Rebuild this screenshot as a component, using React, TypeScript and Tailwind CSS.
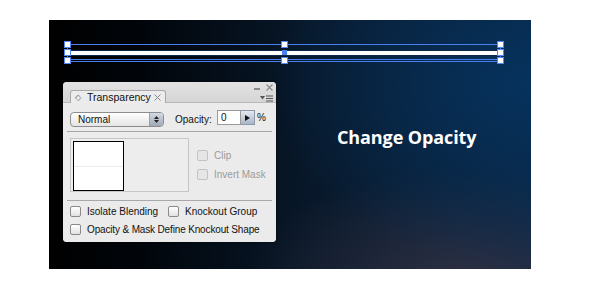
import React from "react";

function Handle({ x, y, solid = false }: { x: number; y: number; solid?: boolean }) {
  if (solid) {
    return (
      <div
        className="absolute w-[5px] h-[5px] bg-[#4a7ff0]"
        style={{ left: x - 2.5, top: y - 2.5 }}
      />
    );
  }
  return (
    <div
      className="absolute w-[7px] h-[7px] border-[1.5px] border-[#5486f2] bg-white"
      style={{ left: x - 3.5, top: y - 3.5 }}
    />
  );
}

function Check({ disabled = false }: { disabled?: boolean }) {
  return (
    <div
      className={
        disabled
          ? "w-[11px] h-[11px] shrink-0 rounded-[2px] border border-[#c2c2c2] bg-[#e6e6e6]"
          : "w-[11px] h-[11px] shrink-0 rounded-[2px] border border-[#8a8a8a] bg-[linear-gradient(#ffffff,#e2e2e2)]"
      }
    />
  );
}

function Panel() {
  return (
    <div className="absolute left-[14px] top-[62px] w-[213px] h-[160px] rounded-[4px] bg-[#e9e9e9] overflow-hidden flex flex-col font-['Liberation_Sans',Arial,sans-serif] text-[10px] text-[#111] shadow-[0_0_3px_rgba(0,0,0,0.6)]">
      {/* chrome */}
      <div className="h-[21px] bg-[linear-gradient(#e2e2e2,#d6d6d6)] border-b border-[#b9b9b9] flex flex-col">
        <div className="h-[8px] flex justify-end items-start pr-[3px] gap-[6px] text-[#8a8a8a]">
          <div className="w-[6px] h-[1.5px] bg-[#8a8a8a] mt-[6px]" />
          <svg width="7" height="7" viewBox="0 0 7 7" className="mt-[2px]">
            <path d="M0.5 0.5 L6.5 6.5 M6.5 0.5 L0.5 6.5" stroke="#8a8a8a" strokeWidth="1.1" />
          </svg>
        </div>
        <div className="h-[13px] flex items-stretch pl-[7px] pr-[3px]">
          <div className="w-[96px] -mb-px bg-[#ececec] border border-b-0 border-[#a9a9a9] rounded-t-[3px] flex items-center pl-[4px] pt-[1px] text-[10.5px] leading-none">
            <span className="text-[8px] text-[#666] w-[8px]">◇</span>
            <span className="ml-[4px]">Transparency</span>
            <svg width="7" height="7" viewBox="0 0 7 7" className="ml-[3px]">
              <path d="M0.5 0.5 L6.5 6.5 M6.5 0.5 L0.5 6.5" stroke="#8a8a8a" strokeWidth="1" />
            </svg>
          </div>
          <div className="ml-auto flex items-center gap-[1px] pt-[4px]">
            <svg width="5" height="4" viewBox="0 0 5 4">
              <path d="M0 0 L5 0 L2.5 3.5 Z" fill="#555" />
            </svg>
            <svg width="7" height="7" viewBox="0 0 7 7">
              <path d="M0 1 H7 M0 3.5 H7 M0 6 H7" stroke="#555" strokeWidth="1" />
            </svg>
          </div>
        </div>
      </div>

      {/* body */}
      <div className="flex flex-col px-[4px] bg-[#ebebeb] flex-1">
        <div className="mt-[7px] h-[17px] flex items-start">
          <div className="ml-[3px] mt-[2px] w-[94px] h-[15px] rounded-[4px] border border-[#8d8d8d] bg-[linear-gradient(#ffffff,#e4e4e4)] flex items-center">
            <span className="pl-[7px] flex-1 leading-none">Normal</span>
            <div className="w-[14px] h-full border-l border-[#a0a0a0] rounded-r-[3px] bg-[linear-gradient(#d4dae3,#9ea8b6)] flex flex-col items-center justify-center gap-[1px]">
              <svg width="5" height="3" viewBox="0 0 5 3"><path d="M0 3 L5 3 L2.5 0 Z" fill="#222" /></svg>
              <svg width="5" height="3" viewBox="0 0 5 3"><path d="M0 0 L5 0 L2.5 3 Z" fill="#222" /></svg>
            </div>
          </div>
          <span className="ml-[11px] w-[42px] mt-[2px] leading-[15px]">Opacity:</span>
          <div className="w-[24px] h-[15px] border border-[#9a9a9a] bg-white flex items-center pl-[3px] leading-none">0</div>
          <div className="w-[14px] h-[15px] border border-l-0 border-[#8e98a8] bg-[linear-gradient(#e2e8f0,#a9b6c8)] flex items-center justify-center">
            <svg width="5" height="6" viewBox="0 0 5 6"><path d="M0 0 L5 3 L0 6 Z" fill="#111" /></svg>
          </div>
          <span className="ml-[2px] leading-[15px]">%</span>
        </div>

        <div className="mt-[4px] h-px bg-[#a8a8a8]" />

        <div className="mt-[6px] flex">
          <div className="ml-[3px] w-[119px] h-[54px] border border-[#c6c6c6] bg-[#ededed] pl-[2px] pt-[2px]">
            <div className="w-[51px] h-[50px] border border-black bg-white flex flex-col">
              <div className="h-[24px]" />
              <div className="h-px bg-[#ececec]" />
            </div>
          </div>
          <div className="ml-[8px] mt-[12px] flex flex-col gap-[8px] text-[#9b9b9b]">
            <div className="flex items-center gap-[6px] h-[11px]">
              <Check disabled />
              <span className="leading-none">Clip</span>
            </div>
            <div className="flex items-center gap-[6px] h-[11px]">
              <Check disabled />
              <span className="leading-none">Invert Mask</span>
            </div>
          </div>
        </div>

        <div className="mt-[8px] h-px bg-[#a8a8a8]" />

        <div className="mt-[5px] flex items-center h-[11px] pl-[3px]">
          <div className="flex items-center gap-[6px] w-[98px]">
            <Check />
            <span className="leading-none">Isolate Blending</span>
          </div>
          <div className="flex items-center gap-[6px]">
            <Check />
            <span className="leading-none">Knockout Group</span>
          </div>
        </div>
        <div className="mt-[7px] flex items-center h-[11px] pl-[3px] gap-[6px]">
          <Check />
          <span className="leading-none tracking-[-0.15px]">Opacity &amp; Mask Define Knockout Shape</span>
        </div>
      </div>
    </div>
  );
}

export default function App() {
  return (
    <div className="w-[600px] h-[296px] bg-white pt-[20px] pl-[49px]">
      <div className="relative w-[482px] h-[249px] overflow-hidden bg-[radial-gradient(ellipse_55%_75%_at_100%_25%,#06325d_0%,rgba(6,50,93,0)_100%),radial-gradient(ellipse_45%_45%_at_85%_105%,rgba(75,60,75,0.55)_0%,rgba(75,60,75,0)_100%),linear-gradient(90deg,#000000_0%,#01050a_18%,#08182a_55%,#0b2440_100%)]">
        {/* selected path artwork */}
        <div className="absolute left-[19px] top-[24px] w-[432px] h-px bg-[#4a7ff0]" />
        <div className="absolute left-[19px] top-[30px] w-[432px] h-[6px] bg-[#0d2848]" />
        <div className="absolute left-[19px] top-[31px] w-[432px] h-[4px] bg-white" />
        <div className="absolute left-[19px] top-[39px] w-[432px] h-px bg-[#4a7ff0]" />
        <div className="absolute left-[19px] top-[41px] w-[432px] h-px bg-[#4a7ff0]" />
        <div className="absolute left-[18px] top-[25px] w-px h-[16px] bg-[#4a7ff0]" />
        <div className="absolute left-[451px] top-[25px] w-px h-[16px] bg-[#4a7ff0]" />
        <Handle x={18.7} y={24.7} />
        <Handle x={18.7} y={32.7} />
        <Handle x={18.7} y={40.7} />
        <Handle x={235} y={24.7} />
        <Handle x={235} y={32.7} solid />
        <Handle x={235} y={40.7} />
        <Handle x={451} y={24.7} />
        <Handle x={451} y={32.7} />
        <Handle x={451} y={40.7} />

        <Panel />

        <div className="absolute left-[288px] top-[108px] text-white font-['Open_Sans',sans-serif] font-bold text-[18px] leading-none tracking-[-0.1px]">
          Change Opacity
        </div>
      </div>
    </div>
  );
}
